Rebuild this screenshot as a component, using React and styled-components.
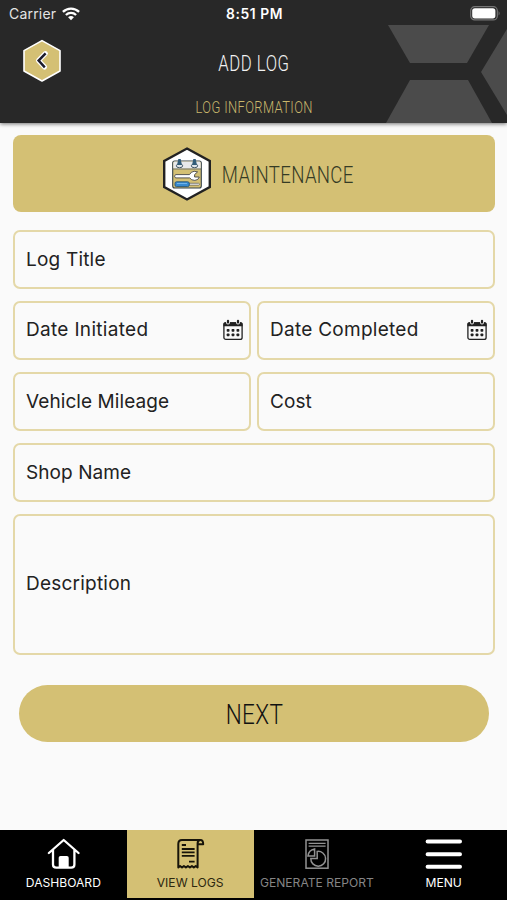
import React from 'react';
import styled, { createGlobalStyle } from 'styled-components';

function App() {
  return (
    <>
      <GlobalStyle />
      <Screen>
        <Header>
          <HeaderPattern />
          <StatusBar>
            <Carrier>
              Carrier
              <WifiIcon />
            </Carrier>
            <Time>8:51 PM</Time>
            <BatteryIcon />
          </StatusBar>
          <TitleRow>
            <BackButton aria-label="Back">
              <BackIcon />
            </BackButton>
            <Title>
              <Condensed $scale={0.76} $spacing="0.7px">ADD LOG</Condensed>
            </Title>
          </TitleRow>
          <SubTitle>
            <Condensed $scale={0.76} $spacing="0.5px">LOG INFORMATION</Condensed>
          </SubTitle>
        </Header>
        <Form>
          <Banner>
            <MaintenanceIcon />
            <BannerText>
              <Condensed $scale={0.76} $spacing="0.4px">MAINTENANCE</Condensed>
            </BannerText>
          </Banner>
          <Fields>
            <Field $wide>
              <Label $spacing="0.2px">Log Title</Label>
            </Field>
            <Field>
              <Label $spacing="0.32px" $lift="3px">Date Initiated</Label>
              <CalendarIcon />
            </Field>
            <Field>
              <Label $spacing="0.27px" $lift="3px">Date Completed</Label>
              <CalendarIcon />
            </Field>
            <Field>
              <Label $spacing="0.08px">Vehicle Mileage</Label>
            </Field>
            <Field>
              <Label $spacing="0.1px">Cost</Label>
            </Field>
            <Field $wide>
              <Label $spacing="0.08px">Shop Name</Label>
            </Field>
            <Field $wide>
              <Label $spacing="0.22px" $lift="2px">Description</Label>
            </Field>
          </Fields>
          <NextButton>
            <Condensed $scale={0.79} $spacing="0.5px">NEXT</Condensed>
          </NextButton>
        </Form>
        <TabBar>
          <Tab>
            <HomeIcon />
            <TabLabel>DASHBOARD</TabLabel>
          </Tab>
          <Tab $active>
            <LogIcon />
            <TabLabel>VIEW LOGS</TabLabel>
          </Tab>
          <Tab $disabled>
            <ReportIcon />
            <TabLabel>GENERATE REPORT</TabLabel>
          </Tab>
          <Tab>
            <MenuIcon />
            <TabLabel>MENU</TabLabel>
          </Tab>
        </TabBar>
      </Screen>
    </>
  );
}

export default App;

function HeaderPattern() {
  return (
    <Pattern width="121" height="123" viewBox="0 0 121 123" fill="#4b4b4b">
      <path d="M2 25H103L81 63H24Z" />
      <path d="M24 80H82L106 123H0Z" />
      <path d="M121 29L95 72L121 115Z" />
    </Pattern>
  );
}

function WifiIcon() {
  return (
    <svg width="18" height="14" viewBox="0 0 18 14" fill="none" stroke="#fff" strokeWidth="2.3">
      <path d="M0.9 4.9C5.5 0.4 12.5 0.4 17.1 4.9" />
      <path d="M3.9 8C6.8 5.2 11.2 5.2 14.1 8" />
      <path d="M6.1 10.2C7.8 8.7 10.2 8.7 11.9 10.2L9 13.2Z" fill="#fff" stroke="none" />
    </svg>
  );
}

function BatteryIcon() {
  return (
    <svg width="31" height="15" viewBox="0 0 31 15">
      <rect x="0.7" y="0.7" width="26.6" height="13.2" rx="4" fill="none" stroke="#757575" strokeWidth="1.2" />
      <rect x="2.2" y="2.2" width="23.2" height="10.2" rx="2.6" fill="#fff" />
      <path d="M28.6 5Q30.6 7.3 28.6 9.6Z" fill="#757575" />
    </svg>
  );
}

function BackIcon() {
  return (
    <svg width="40" height="44" viewBox="0 0 40 44">
      <path
        d="M20 1.6L38 11.6V32L20 42L2 32V11.6Z"
        fill="#d4c074"
        stroke="#fff"
        strokeWidth="1.6"
        strokeLinejoin="round"
      />
      <path
        d="M23.4 14.6L16.5 21.6L22.6 28"
        fill="none"
        stroke="#fff"
        strokeWidth="5"
        strokeLinejoin="round"
        strokeLinecap="round"
      />
      <path d="M23.6 14.3L16.6 21.6L22.8 28.4" fill="none" stroke="#1b1b2b" strokeWidth="2.4" />
    </svg>
  );
}

function MaintenanceIcon() {
  return (
    <svg width="48" height="54" viewBox="0 0 48 54">
      <path d="M24 1.5L46.8 14V40L24 52.5L1.2 40V14Z" fill="#fff" stroke="#222" strokeWidth="2.4" />
      <rect x="9.7" y="14" width="28.6" height="27" rx="2" fill="#d4c074" stroke="#36424a" strokeWidth="1.1" />
      <path d="M10.3 21.5V16Q10.3 14.6 12 14.6H36Q37.7 14.6 37.7 16V21.5Z" fill="#e8e9eb" />
      <path d="M10 22H38" stroke="#59636a" strokeWidth="0.8" />
      <g fill="#dfe5ea" stroke="#34495a" strokeWidth="0.9">
        <ellipse cx="16.5" cy="18.8" rx="3.2" ry="1.9" />
        <ellipse cx="31.5" cy="18.8" rx="3.2" ry="1.9" />
      </g>
      <g fill="#315c79">
        <path d="M15.3 12H17.7L18.9 18H14.1Z" />
        <path d="M30.3 12H32.7L33.9 18H29.1Z" />
      </g>
      <path
        d="M12.5 27.6H26.5Q28 24.5 31.2 24.3L34.6 24.9L31.6 27.6V30H36.3Q35.5 33.2 31.8 33.4Q28.3 33.4 26.7 30.9H12.5Q10.6 29.2 12.5 27.6Z"
        fill="#fff"
        stroke="#444"
        strokeWidth="0.9"
      />
      <path d="M26 36.3H35.5L36.7 37.2L35.5 38.1H26Z" fill="#fff" stroke="#555" strokeWidth="0.7" />
      <rect x="12" y="34.8" width="14.2" height="4.8" rx="1.5" fill="#388bd1" stroke="#255477" strokeWidth="0.9" />
      <path d="M14 36.5H24" stroke="#82bff0" strokeWidth="0.8" />
    </svg>
  );
}

function CalendarIcon() {
  return (
    <CalendarSvg width="22" height="22" viewBox="0 0 22 22">
      <rect x="1.9" y="4" width="18.2" height="16.4" rx="2" fill="none" stroke="#222" strokeWidth="1.3" />
      <path d="M1.4 7.2V4.8Q1.4 3.2 3 3.2H19Q20.6 3.2 20.6 4.8V7.2Z" fill="#222" />
      <g stroke="#fafafa" strokeWidth="3.8" strokeLinecap="round">
        <path d="M6 1.8V3.6" />
        <path d="M16 1.8V3.6" />
      </g>
      <g stroke="#222" strokeWidth="2.2" strokeLinecap="round">
        <path d="M6 1.8V3.6" />
        <path d="M16 1.8V3.6" />
      </g>
      <g fill="#222">
        {[10, 14.6].map(y =>
          [4.7, 9.6, 14.5].map(x => (
            <rect key={`${x}-${y}`} x={x} y={y} width="2.8" height="2.7" rx="0.7" />
          )),
        )}
      </g>
    </CalendarSvg>
  );
}

function HomeIcon() {
  return (
    <svg width="34" height="32" viewBox="-0.7 0 34 32">
      <path
        d="M2.2 15L17 2L31.8 15M6.3 12V26.5Q6.3 29.7 9.5 29.7H24.5Q27.7 29.7 27.7 26.5V12"
        fill="none"
        stroke="#fff"
        strokeWidth="2.3"
        strokeLinejoin="round"
        strokeLinecap="round"
      />
      <path d="M12 30V19.8Q12 18 13.8 18H20.2Q22 18 22 19.8V30Z" fill="#fff" />
    </svg>
  );
}

function LogIcon() {
  return (
    <svg width="34" height="32" viewBox="0 0 34 32" fill="none" stroke="#17140a" strokeWidth="2">
      <path
        d="M27 2H9Q5.3 2 5.3 6V29.5L7.1 28L9 29.5L10.9 28L12.9 29.5L14.9 28L16.9 29.5L18.9 28L20.8 29.5L22.7 28L24.6 29.5V5.5Q24.6 2 27.4 2Q30.2 2 30.2 6.2H25"
        strokeLinejoin="round"
      />
      <path d="M8.8 7H13M8.8 11H21.6M8.8 14.4H21.6M8.8 17.8H21.6M16 23.6H21.6" strokeWidth="1.8" />
    </svg>
  );
}

function ReportIcon() {
  return (
    <svg width="34" height="32" viewBox="0 0 34 32" fill="none" stroke="#929292" strokeWidth="1.5">
      <rect x="6" y="2" width="22" height="28.2" />
      <path d="M8.6 5.4H25.6M8.6 8.2H25.6" strokeWidth="1.2" />
      <path d="M17.2 20.4V13.4A7.4 7.4 0 1 1 10.8 20.4Z" />
      <path d="M14.6 11V17.9H8Q8.6 12.1 14.6 11Z" />
    </svg>
  );
}

function MenuIcon() {
  return (
    <svg width="38" height="32" viewBox="0 0 38 32" stroke="#fff" strokeWidth="4" strokeLinecap="round">
      <path d="M2.6 3.6H35M2.6 16.2H35M2.6 28.8H35" />
    </svg>
  );
}

const GlobalStyle = createGlobalStyle`
  * {
    box-sizing: border-box;
  }

  body {
    margin: 0;
    background: #fafafa;
    font-family: Inter, 'Liberation Sans', sans-serif;
  }

  button {
    padding: 0;
    border: 0;
    background: none;
    color: inherit;
    font: inherit;
  }

  svg {
    flex: none;
    display: block;
  }
`;

const Screen = styled.div`
  display: flex;
  flex-direction: column;
  width: 507px;
  height: 900px;
  overflow: hidden;
  background: #fafafa;
`;

const Header = styled.header`
  position: relative;
  flex: none;
  height: 123px;
  background: #282828;
  box-shadow: 0 1px 4px rgba(0, 0, 0, 0.55);
`;

const Pattern = styled.svg`
  position: absolute;
  right: 0;
  top: 0;
`;

const StatusBar = styled.div`
  display: grid;
  grid-template-columns: 1fr auto 1fr;
  align-items: center;
  height: 27px;
  padding: 0 6px 0 9px;
  color: #fff;

  & > :last-child {
    justify-self: end;
  }
`;

const Carrier = styled.div`
  display: flex;
  align-items: center;
  gap: 6px;
  color: #e4e4e4;
  font-size: 14px;
  letter-spacing: 0.2px;
`;

const Time = styled.div`
  margin-right: 1px;
  font-size: 13.8px;
  font-weight: 600;
  letter-spacing: 0.6px;
`;

const Condensed = styled.span`
  display: inline-block;
  margin-right: -${props => props.$spacing};
  font-family: Roboto, 'Liberation Sans', sans-serif;
  font-weight: 350;
  letter-spacing: ${props => props.$spacing};
  white-space: nowrap;
  transform: scaleX(${props => props.$scale});
`;

const TitleRow = styled.div`
  display: grid;
  grid-template-columns: 60px 1fr 60px;
  align-items: center;
  height: 67px;
`;

const BackButton = styled.button`
  justify-self: end;
  margin-right: -2px;
`;

const Title = styled.h1`
  margin: 4px 0 0;
  color: #f2f2f2;
  text-align: center;
  font-size: 22px;
  font-weight: 400;
`;

const SubTitle = styled.div`
  color: #c9b76c;
  text-align: center;
  font-size: 17px;
  line-height: 27px;
`;

const Form = styled.main`
  flex: 1;
  padding: 12px 12px 0 13px;
`;

const Banner = styled.div`
  display: flex;
  align-items: center;
  height: 77px;
  padding-left: 150px;
  border-radius: 8px;
  background: #d4c074;
`;

const BannerText = styled.div`
  display: flex;
  justify-content: center;
  width: 131px;
  margin: 1px 0 0 11px;
  color: #343b25;
  font-size: 24.5px;
`;

const Fields = styled.div`
  display: grid;
  grid-template-columns: 1fr 1fr;
  grid-template-rows: repeat(4, 59px) 141px;
  gap: 12px 6px;
  margin-top: 18px;
`;

const Field = styled.div`
  display: flex;
  align-items: center;
  justify-content: space-between;
  grid-column: ${props => (props.$wide ? '1 / -1' : 'auto')};
  padding: 0 5px 0 11px;
  border: 2px solid #e4d8a8;
  border-radius: 7px;
`;

const Label = styled.span`
  margin-top: -${props => props.$lift || '0px'};
  color: #222;
  font-size: 19px;
  letter-spacing: ${props => props.$spacing};
`;

const CalendarSvg = styled.svg`
  margin-top: -1px;
`;

const NextButton = styled.button`
  display: block;
  width: 470px;
  height: 57px;
  margin: 30px 0 0 6px;
  border-radius: 29px;
  background: #d4c074;
  color: #111;
  font-size: 28.5px;
`;

const TabBar = styled.nav`
  display: grid;
  grid-template-columns: repeat(4, 1fr);
  flex: none;
  height: 70px;
  padding-bottom: 2px;
  background: #000;
`;

const tabColor = props => {
  if (props.$active) return '#2d270f';
  return props.$disabled ? '#858585' : '#fff';
};

const Tab = styled.button`
  display: flex;
  flex-direction: column;
  align-items: center;
  padding-top: 8px;
  background: ${props => (props.$active ? '#d4c074' : '#000')};
  color: ${tabColor};
`;

const TabLabel = styled.span`
  margin-top: 5px;
  font-size: 12.1px;
  line-height: 16px;
  white-space: nowrap;
`;
